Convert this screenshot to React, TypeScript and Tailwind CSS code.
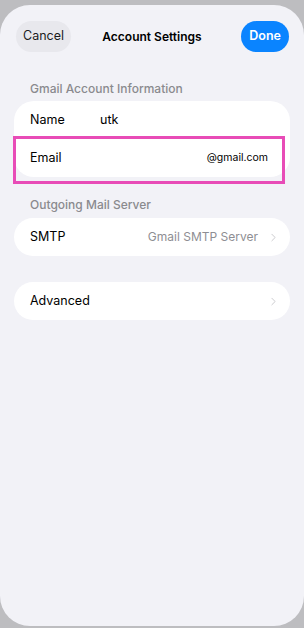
import { ChevronRight } from 'lucide-react';

function Row({ label, value, chevron, valueClass }: { label: string; value?: string; chevron?: boolean; valueClass?: string }) {
  return (
    <div className="flex h-[38px] items-center pl-4 pr-[10px]">
      <span className="text-[12.5px] text-black">{label}</span>
      <span className={valueClass ?? 'ml-auto text-[12px] text-[#8e8e93]'}>{value}</span>
      {chevron && <ChevronRight className="ml-[9px] h-[13px] w-[13px] text-[#c4c4c7]" strokeWidth={1.6} />}
    </div>
  );
}

export default function App() {
  return (
    <div className="h-[628px] w-[304px] bg-[#bdbdc0] pt-[5px] font-['Inter',sans-serif]">
      <div className="relative h-[621px] w-full rounded-[30px] bg-[#f2f2f7]">
        {/* Header */}
        <div className="grid grid-cols-[1fr_auto_1fr] items-center px-4 pt-4">
          <div>
            <button className="h-[31px] rounded-full bg-[#e8e8ed] px-[7px] text-[12.5px] text-[#1c1c1e]">Cancel</button>
          </div>
          <h1 className="text-[12px] font-semibold text-black">Account Settings</h1>
          <div className="flex justify-end">
            <button className="mr-[-1px] h-[31px] rounded-full bg-[#0a84ff] px-[8px] text-[12.5px] font-semibold text-white">Done</button>
          </div>
        </div>

        {/* Account info */}
        <div className="mt-[29px] px-[14px]">
          <p className="pl-4 text-[12px] font-medium leading-[16px] text-[#8a8a8e]">Gmail Account Information</p>
          <div className="mt-[4px] rounded-[20px] bg-white">
            <div className="flex h-[38px] items-center pl-4">
              <span className="w-[70px] text-[12.5px] text-black">Name</span>
              <span className="text-[12.5px] text-black">utk</span>
            </div>
            <div className="relative">
              <Row label="Email" value="@gmail.com" valueClass="ml-auto mr-[12px] text-[10.5px] text-black" />
              <div className="pointer-events-none absolute left-[-1px] right-[5px] top-[-3px] bottom-[-7px] border-[3px] border-[#e84cb7]" />
            </div>
          </div>

          <p className="mt-[20px] pl-4 text-[12px] font-medium leading-[16px] text-[#8a8a8e]">Outgoing Mail Server</p>
          <div className="mt-[5px] rounded-[20px] bg-white">
            <Row label="SMTP" value="Gmail SMTP Server" chevron />
          </div>

          <div className="mt-[26px] rounded-[20px] bg-white">
            <Row label="Advanced" chevron />
          </div>
        </div>
      </div>
    </div>
  );
}
